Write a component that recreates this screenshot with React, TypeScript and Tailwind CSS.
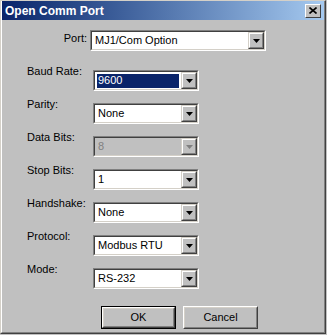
import React from "react";

const font = { fontFamily: '"Liberation Sans", Arial, sans-serif' };

function Arrow({ disabled }: { disabled?: boolean }) {
  return (
    <svg width="7" height="4" viewBox="0 0 7 4">
      <path d="M0 0h7L3.5 4z" fill={disabled ? "#808080" : "#000"} />
    </svg>
  );
}

function Combo({
  value,
  width,
  selected,
  disabled,
}: {
  value: string;
  width: string;
  selected?: boolean;
  disabled?: boolean;
}) {
  return (
    <div
      className={`${width} h-[21px] border border-t-[#808080] border-l-[#808080] border-b-white border-r-white`}
    >
      <div
        className={`h-full flex border border-t-[#404040] border-l-[#404040] border-b-[#d4d0c8] border-r-[#d4d0c8] ${
          disabled ? "bg-[#c0c0c0]" : "bg-white"
        }`}
      >
        <div className="flex-1 flex items-center pl-[2px] pr-[2px] min-w-0">
          <div
            className={`h-[14px] flex items-center px-[1px] text-[11px] leading-none ${
              selected ? "bg-[#0a246a] text-white w-full" : disabled ? "text-[#808080]" : "text-black"
            }`}
          >
            {value}
          </div>
        </div>
        <div className="w-[16px] h-full border border-t-[#d4d0c8] border-l-[#d4d0c8] border-b-[#404040] border-r-[#404040]">
          <div className="w-full h-full bg-[#c0c0c0] border border-t-white border-l-white border-b-[#808080] border-r-[#808080] flex items-center justify-center">
            <Arrow disabled={disabled} />
          </div>
        </div>
      </div>
    </div>
  );
}

function Row({
  label,
  value,
  selected,
  disabled,
}: {
  label: string;
  value: string;
  selected?: boolean;
  disabled?: boolean;
}) {
  return (
    <div className="flex items-start h-[21px]">
      <div className="w-[66px] text-[11px] leading-[13px] text-black -mt-[5px]">{label}</div>
      <Combo value={value} width="w-[106px]" selected={selected} disabled={disabled} />
    </div>
  );
}

function Btn({ label, isDefault }: { label: string; isDefault?: boolean }) {
  return (
    <div className={`w-[75px] h-[23px] ${isDefault ? "border border-black" : ""}`}>
      <div className="w-full h-full border border-t-white border-l-white border-b-[#404040] border-r-[#404040]">
        <div className="w-full h-full bg-[#c0c0c0] border border-t-[#d4d0c8] border-l-[#d4d0c8] border-b-[#808080] border-r-[#808080] flex items-center justify-center text-[11px] text-black">
          {label}
        </div>
      </div>
    </div>
  );
}

export default function App() {
  return (
    <div style={font} className="w-[327px] h-[335px] bg-[#c0c0c0] overflow-hidden">
      <div className="w-[326px] h-[334px] border border-t-[#d4d0c8] border-l-[#d4d0c8] border-b-[#404040] border-r-[#404040]">
        <div className="w-full h-full border border-t-0 border-l-white border-b-[#808080] border-r-[#808080] flex flex-col">
          <div className="h-[19px] bg-gradient-to-r from-[#0a246a] to-[#a6caf0] flex items-center justify-between pl-[3px] pr-[3px]">
            <span className="text-white font-bold text-[12px] leading-none">Open Comm Port</span>
            <div className="w-[16px] h-[14px] border border-t-white border-l-white border-b-[#404040] border-r-[#404040] bg-[#c0c0c0] flex items-center justify-center">
              <svg width="8" height="7" viewBox="0 0 8 7">
                <path d="M0.5 0.5l7 6M7.5 0.5l-7 6" stroke="#000" strokeWidth="1.6" />
              </svg>
            </div>
          </div>
          <div className="flex flex-col pl-[24px] pt-[10px]">
            <div className="flex items-start h-[21px]">
              <div className="w-[64px] text-right pr-[3px] text-[11px] leading-[13px] pt-[2px]">Port:</div>
              <Combo value="MJ1/Com Option" width="w-[176px]" />
            </div>
            <div className="flex flex-col gap-[12px] mt-[19px] pl-[1px]">
              <Row label="Baud Rate:" value="9600" selected />
              <Row label="Parity:" value="None" />
              <Row label="Data Bits:" value="8" disabled />
              <Row label="Stop Bits:" value="1" />
              <Row label="Handshake:" value="None" />
              <Row label="Protocol:" value="Modbus RTU" />
              <Row label="Mode:" value="RS-232" />
            </div>
            <div className="flex gap-[7px] ml-[75px] mt-[17px]">
              <Btn label="OK" isDefault />
              <Btn label="Cancel" />
            </div>
          </div>
        </div>
      </div>
    </div>
  );
}
